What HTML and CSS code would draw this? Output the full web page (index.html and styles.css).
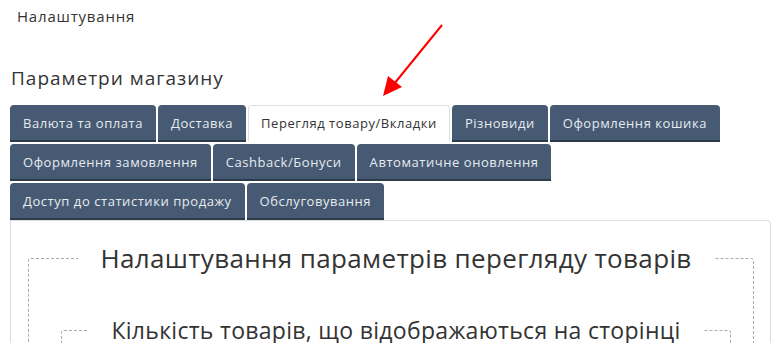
FILE: index.html
```html
<!DOCTYPE html>
<html lang="uk">
<head>
<meta charset="utf-8">
<link rel="stylesheet" href="styles.css">
</head>
<body>
<div class="page">
  <div class="crumb">Налаштування</div>
  <h1 class="title">Параметри магазину</h1>
  <svg class="arrow" width="70" height="80" viewBox="0 0 70 80">
    <line x1="62" y1="7" x2="14" y2="66" stroke="#ff0000" stroke-width="2"/>
    <polygon points="3,78 8,58 22,69" fill="#ff0000"/>
  </svg>
  <ul class="tabs">
    <li class="tab">Валюта та оплата</li>
    <li class="tab">Доставка</li>
    <li class="tab active">Перегляд товару/Вкладки</li>
    <li class="tab">Різновиди</li>
    <li class="tab">Оформлення кошика</li>
    <li class="tab">Оформлення замовлення</li>
    <li class="tab">Cashback/Бонуси</li>
    <li class="tab">Автоматичне оновлення</li>
    <li class="tab">Доступ до статистики продажу</li>
    <li class="tab">Обслуговування</li>
  </ul>
  <div class="panel">
    <fieldset class="group">
      <legend class="legend-main">Налаштування параметрів перегляду товарів</legend>
      <fieldset class="subgroup">
        <legend class="legend-sub">Кількість товарів, що відображаються на сторінці</legend>
        <div class="spacer"></div>
      </fieldset>
    </fieldset>
  </div>
</div>
</body>
</html>
```
FILE: styles.css
```css
html, body {
  margin: 0;
  padding: 0;
  background: #ffffff;
}
body {
  font-family: "Open Sans", "Noto Sans", sans-serif;
  color: #333333;
  overflow: hidden;
}
.page {
  position: relative;
  padding: 0 12px 0 10px;
}
.crumb {
  font-size: 15px;
  letter-spacing: 0.8px;
  line-height: 20px;
  padding: 6px 0 0 7px;
  color: #333;
}
.title {
  font-size: 19px;
  letter-spacing: 1px;
  font-weight: 400;
  line-height: 26px;
  margin: 39px 0 14px 1px;
  color: #333;
}
.arrow {
  position: absolute;
  left: 380px;
  top: 18px;
}
.tabs {
  list-style: none;
  margin: 0;
  padding: 0;
  display: flex;
  flex-wrap: wrap;
  width: 720px;
  gap: 2px 2px;
}
.tab {
  background: #465a73;
  color: #e6ebf0;
  font-size: 13px;
  letter-spacing: 0.55px;
  line-height: 20px;
  padding: 8px 13px 7px;
  border-bottom: 2px solid #2c3a4a;
  border-radius: 4px 4px 0 0;
}
.tab.active {
  background: #ffffff;
  color: #333;
  border: 1px solid #dddddd;
  border-bottom: 2px solid #ffffff;
  padding: 7px 12px 7px;
}
.panel {
  border: 1px solid #dddddd;
  border-radius: 0 4px 0 0;
  padding: 20px 16px 0 17px;
  height: 200px;
  width: 726px;
}
.group {
  border: 1px dashed #aaaaaa;
  border-radius: 3px;
  margin: 0;
  padding: 10px 22px 0 32px;
}
.legend-main {
  margin: 0 auto;
  padding: 0 22px;
  font-size: 26px;
  letter-spacing: 0.35px;
  line-height: 34px;
  color: #333;
}
.subgroup {
  border: 1px dashed #aaaaaa;
  border-radius: 3px;
  margin: 30px 0 0 0;
  padding: 0 20px;
}
.legend-sub {
  margin: 0 auto;
  padding: 0 22px;
  font-size: 23px;
  letter-spacing: 0.3px;
  line-height: 30px;
  color: #333;
}
.spacer {
  height: 60px;
}
```
